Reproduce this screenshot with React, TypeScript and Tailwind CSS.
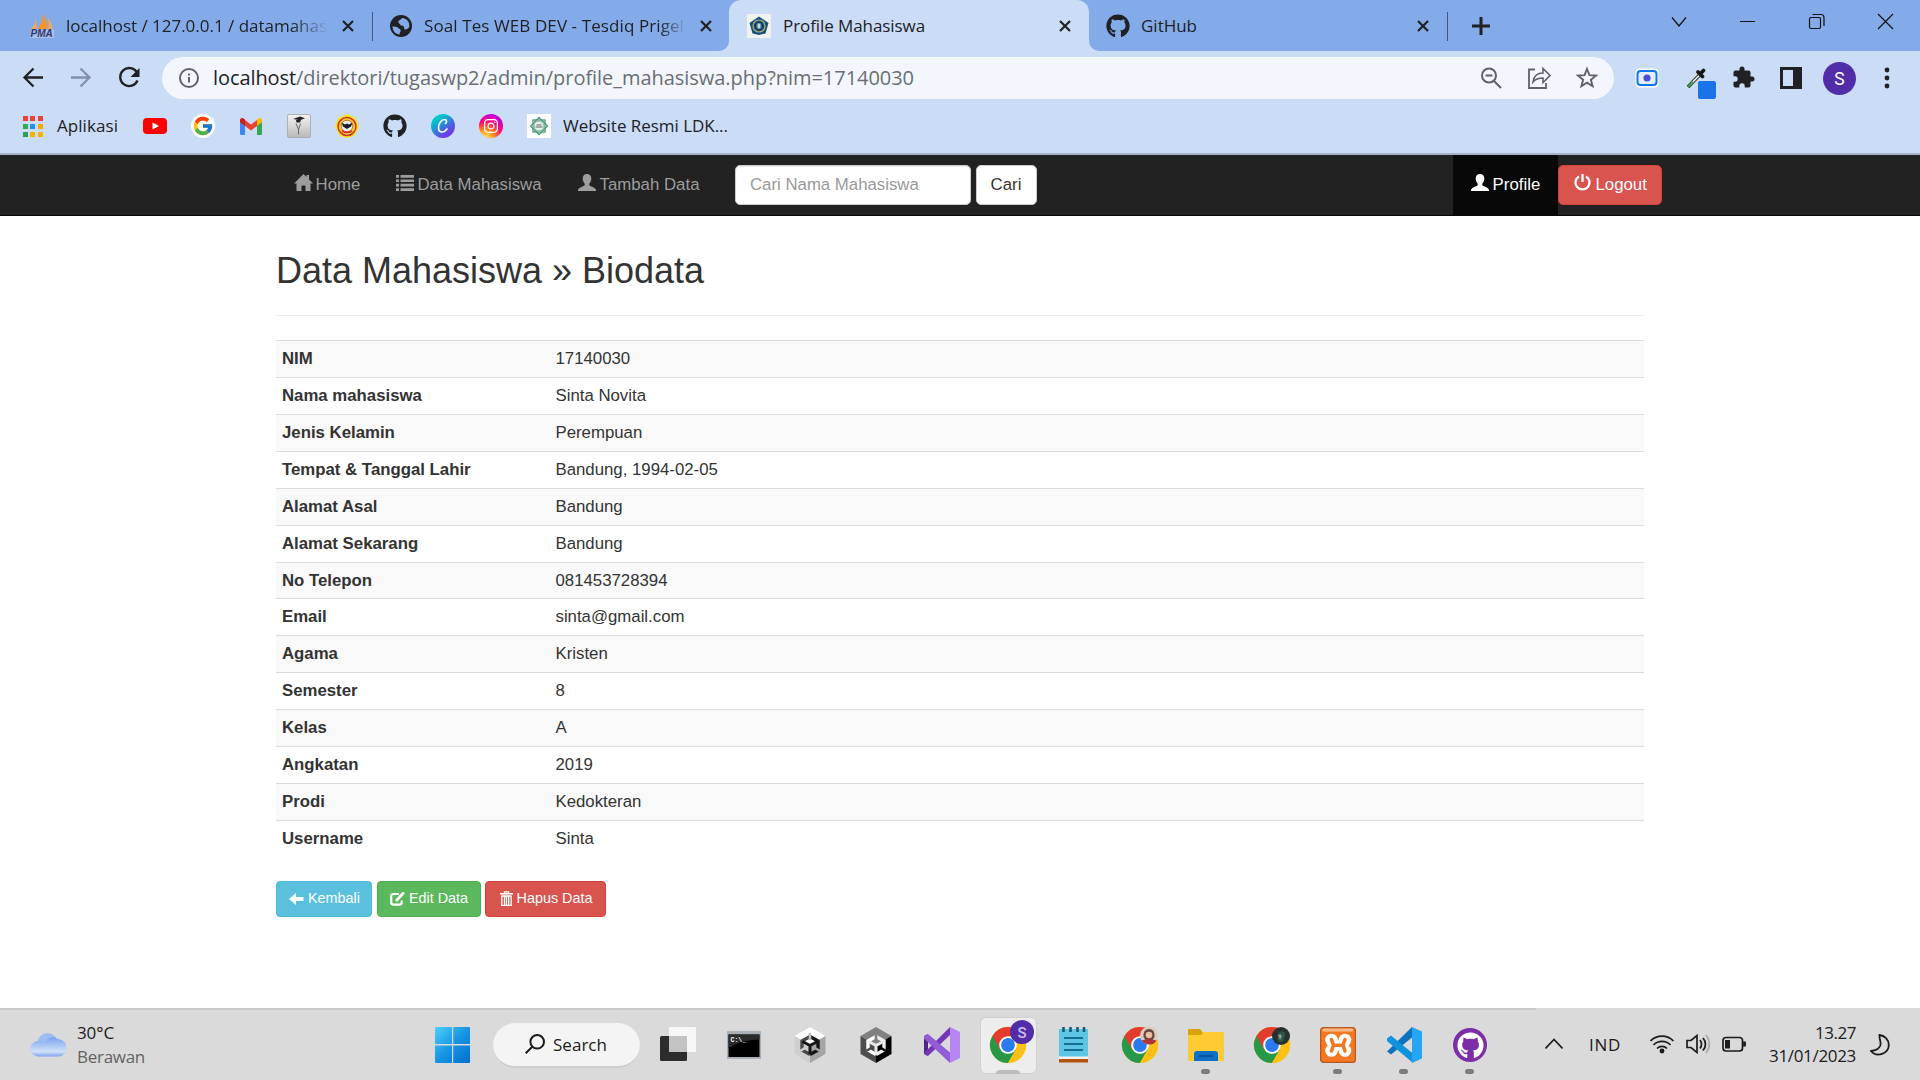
import React, { useLayoutEffect, useRef } from "react";
import { FaGithub, FaInstagram } from "react-icons/fa";
import { FcGoogle } from "react-icons/fc";

/* Text set to a given width by adjusting its letter spacing. */
function T({ w, className = "", children }: { w: number; className?: string; children: string }) {
  const ref = useRef<HTMLSpanElement>(null);
  useLayoutEffect(() => {
    const el = ref.current;
    if (!el) return;
    el.style.letterSpacing = "0px";
    const natural = el.getBoundingClientRect().width;
    el.style.letterSpacing = `${(w - natural) / children.length}px`;
  }, [w, children]);
  return (
    <span ref={ref} className={`inline-block shrink-0 whitespace-pre ${className}`}>
      {children}
    </span>
  );
}

const ui = "font-['Open_Sans','Noto_Sans',sans-serif]";

function Close() {
  return (
    <svg className="block h-3 w-3 shrink-0" viewBox="0 0 12 12" stroke="#202124" strokeWidth="2.2">
      <path d="M1 1l10 10M11 1L1 11" />
    </svg>
  );
}

function Globe() {
  return (
    <svg className="h-[22px] w-[22px] shrink-0" viewBox="0 0 22 22">
      <circle cx="11" cy="11" r="11" fill="#202124" />
      <path d="M2.500 11.500c2 .2 4.500-.1 5.500 1.200 1 1.300 3 1 2.600 3.300-.3 1.500-1.300 1.600-1 3.600C5.500 19 2.500 16 2.500 11.500zM12 3c-1 2-3.500 2-3.700 3.700-.1 1.800 1.900 1.700 2.100 3.100.3 1.500 2.200.4 3.300 1.600 1.200 1.300-.3 2.800 1.200 3 1.800.2 3.300-1 4.300-2.400C20 7 17 3.500 12 3z" fill="#84abe9" />
    </svg>
  );
}

function PmaIcon() {
  return (
    <svg className="h-6 w-6 shrink-0" viewBox="0 0 24 24">
      <path d="M6 4L6.500 15H1.500C4 12 5.500 8 6 4z" fill="#f9a94b" />
      <path d="M13 0c3 5 4.500 10 4.200 15H8c3-4 4.500-9 5-15z" fill="#f7931e" />
      <path d="M18 4c2.500 3 4 7 4.500 11H18.500c.5-4 .2-8-.5-11z" fill="#f9a94b" />
      <path d="M1 15.500h23v8.500H0z" fill="#c5cfea" opacity=".6" />
      <text x="0.500" y="23.300" fontSize="10" fontWeight="700" fontStyle="italic" fontFamily="Liberation Sans" fill="#34376b">PMA</text>
    </svg>
  );
}

function CrestIcon() {
  return (
    <svg className="h-6 w-6 shrink-0" viewBox="0 0 24 24">
      <rect width="24" height="24" fill="#f1f1ee" />
      <path d="M12 2.500l9.500 6.500-3 10.500-6.500 1.500-6.500-1.500L2.500 9z" fill="#14507e" />
      <circle cx="12" cy="12" r="6" fill="none" stroke="#b3b567" strokeWidth="1.200" />
      <circle cx="12" cy="12" r="3.800" fill="#27618a" stroke="#0e3555" />
      <path d="M10.500 9.500h3v5h-3z" fill="#cfd7cf" />
    </svg>
  );
}

function TabBar() {
  return (
    <div className={`flex h-[51px] bg-[#84abe9] text-[17px] text-[#202124] ${ui}`}>
      <div className="flex w-[372px] items-center pl-[30px]">
        <PmaIcon />
        <div className="ml-3 w-[262px] overflow-hidden [mask-image:linear-gradient(to_right,black_86%,transparent)]">
          <T w={261}>localhost / 127.0.0.1 / datamahas</T>
        </div>
        <div className="ml-3.5"><Close /></div>
      </div>
      <div className="mt-[12px] h-[29px] w-px bg-[#47597a]" />
      <div className="flex w-[356px] items-center bg-[#cbdcf6]">
        <div className="flex h-full w-full items-center rounded-br-[10px] bg-[#84abe9] pl-[17px]">
          <Globe />
          <div className="ml-3 w-[262px] overflow-hidden [mask-image:linear-gradient(to_right,black_90%,transparent)]">
            <T w={260}>Soal Tes WEB DEV - Tesdiq Prigel</T>
          </div>
          <div className="ml-[14px]"><Close /></div>
        </div>
      </div>
      <div className="flex w-[360px] bg-[#84abe9]">
        <div className="flex w-full items-center rounded-t-[12px] bg-[#cbdcf6] pl-[18px]">
          <CrestIcon />
          <T w={142} className="ml-3">Profile Mahasiswa</T>
          <div className="ml-[134px]"><Close /></div>
        </div>
      </div>
      <div className="flex w-[358px] bg-[#cbdcf6]">
        <div className="flex w-full items-center rounded-bl-[10px] bg-[#84abe9] pl-[17px]">
          <FaGithub className="h-6 w-6 shrink-0" />
          <T w={56} className="ml-[11px]">GitHub</T>
          <div className="ml-[220px]"><Close /></div>
        </div>
      </div>
      <div className="mt-[12px] h-[29px] w-px bg-[#47597a]" />
      <div className="flex w-[66px] items-center justify-center pr-px">
        <svg className="h-[18px] w-[18px]" viewBox="0 0 18 18" stroke="#202124" strokeWidth="3"><path d="M9 0v18M0 9h18" /></svg>
      </div>
      <div className="ml-[131px] flex h-[43px] items-center">
        <svg className="h-[43px] w-[275px]" viewBox="1645 0 275 43" fill="none" stroke="#111" strokeWidth="1.200">
          <path d="M1672 17.500l7 8.500 7-8.500M1740 21.500h15M1878 14l15 15M1893 14l-15 15" />
          <rect x="1809.500" y="17.500" width="11" height="11" rx="1.500" />
          <path d="M1812.500 14.500h8.500q3 0 3 3v8.500" />
        </svg>
      </div>
    </div>
  );
}

function Toolbar() {
  return (
    <div className={`flex h-[54px] items-center bg-[#cbdcf6] ${ui}`}>
      <svg className="h-[54px] w-[162px] shrink-0" viewBox="0 0 162 54" fill="none" strokeWidth="2.300">
        <path d="M43 26.500H25M33.500 17.500l-9 9 9 9" stroke="#202124" />
        <path d="M71 26.500h18M80.500 17.500l9 9-9 9" stroke="#8391aa" />
        <path d="M137 21.500a9 9 0 1 0 .5 8" stroke="#202124" />
        <path d="M139.500 17v9h-9z" fill="#202124" />
      </svg>
      <div className="flex h-[42px] w-[1452px] shrink-0 items-center rounded-full bg-[#f3f7fd] pl-[17px]">
        <svg className="h-5 w-5" viewBox="0 0 20 20" fill="none" stroke="#5f6368" strokeWidth="2">
          <circle cx="10" cy="10" r="9" /><path d="M10 9v5.500M10 5.500v2" />
        </svg>
        <div className="ml-[14px] w-[703px] text-[20px] leading-[30px]">
          <T w={83} className="text-[#202124]">localhost</T>
          <T w={618} className="text-[#6a6e73]">/direktori/tugaswp2/admin/profile_mahasiswa.php?nim=17140030</T>
        </div>
        <svg className="ml-[562px] h-6 w-[125px]" viewBox="1478 66 125 24" fill="none" stroke="#5f6368" strokeWidth="2">
          <circle cx="1489" cy="75.500" r="7" /><path d="M1494 81l7 7M1485.500 75.500h7" />
          <path d="M1535 69.500h-6v18.500h17v-5" strokeWidth="1.800" />
          <path d="M1533 82c.8-6 4-9 10-9v-4.500l7 7-7 7V78c-5 0-7.500 1-10 4z" strokeWidth="1.600" />
          <path d="M1587 69l2.400 6.200 6.600.4-5.100 4.200 1.700 6.400-5.600-3.600-5.600 3.600 1.700-6.400-5.100-4.200 6.600-.4z" strokeWidth="1.900" />
        </svg>
      </div>
      <svg className="h-[54px] w-[306px] shrink-0" viewBox="1614 51 306 54">
        <rect x="1635.500" y="68.500" width="23" height="19" rx="4" fill="#fff" />
        <rect x="1637.500" y="71" width="19" height="14" rx="3" fill="#e4eefc" stroke="#0b76f6" strokeWidth="2" />
        <circle cx="1647" cy="78" r="3.600" fill="#4a4fd8" />
        <path d="M1699 75.500l-11 11.500" stroke="#333" strokeWidth="3.600" fill="none" />
        <path d="M1699 75.500l-9 9.500" stroke="#e6f0e6" strokeWidth="1.700" />
        <path d="M1692.500 81.500l-4.500 5.500" stroke="#2f9c4a" strokeWidth="2" />
        <path d="M1698 72l4.500 4.500M1700.500 73.500l3-3" stroke="#151515" strokeWidth="3.800" strokeLinecap="round" />
        <rect x="1698" y="81" width="18" height="18" rx="2" fill="#1a73e8" />
        <path transform="translate(1731.500 65.500)" d="M20.500 11H19V7c0-1.100-.9-2-2-2h-4V3.500a2.500 2.500 0 0 0-5 0V5H4c-1.100 0-2 .9-2 2v3.800h1.500a2.700 2.700 0 0 1 0 5.400H2V20c0 1.100.9 2 2 2h3.800v-1.500a2.700 2.700 0 0 1 5.400 0V22H17c1.100 0 2-.9 2-2v-4h1.500a2.500 2.500 0 0 0 0-5z" fill="#202124" />
        <path d="M1780 67h22v22h-22zM1783 70v16h10V70z" fill="#202124" fillRule="evenodd" />
        <circle cx="1839.500" cy="78.500" r="16.500" fill="#512da8" />
        <text x="1839.500" y="85" fontSize="17.500" fill="#fff" textAnchor="middle" fontFamily="Roboto">S</text>
        <g fill="#202124"><circle cx="1887" cy="70" r="2.400" /><circle cx="1887" cy="78" r="2.400" /><circle cx="1887" cy="86" r="2.400" /></g>
      </svg>
    </div>
  );
}

function Slot({ children }: { children: React.ReactNode }) {
  return <div className="flex w-12 shrink-0 items-center justify-center">{children}</div>;
}

function Bookmarks() {
  const dots = ["#ea4335", "#ea4335", "#ea4335", "#34a853", "#1a90f0", "#f5a800", "#2f9c58", "#f5b400", "#f5b400"];
  return (
    <div className={`flex h-[50px] items-center border-b-2 border-[#a3b2cf] bg-[#cbdcf6] pb-[6px] text-[17px] text-[#202124] ${ui}`}>
      <div className="ml-[23px] grid w-5 grid-cols-3 gap-x-[2px] gap-y-[3px]">
        {dots.map((c, i) => (
          <span key={i} className="h-[5px] w-[5px]" style={{ backgroundColor: c }} />
        ))}
      </div>
      <T w={61} className="ml-[14px]">Aplikasi</T>
      <div className="ml-[13px] flex">
        <Slot>
          <svg className="h-4 w-6" viewBox="0 0 24 16"><rect width="24" height="16" rx="4" fill="#f00" /><path d="M9.500 4.500v7L16 8z" fill="#fff" /></svg>
        </Slot>
        <Slot>
          <span className="flex h-6 w-6 items-center justify-center rounded-full bg-white"><FcGoogle className="h-[22px] w-[22px]" /></span>
        </Slot>
        <Slot>
          <svg className="h-[17px] w-[22px]" viewBox="0 0 22 17">
            <path d="M0 3v12.500Q0 17 1.500 17H5V7z" fill="#4285f4" />
            <path d="M22 3v12.500q0 1.500-1.500 1.500H17V7z" fill="#34a853" />
            <path d="M5 2l6 4.500L17 2v6l-6 4.500L5 8z" fill="#ea4335" />
            <path d="M0 2.500C0 0 2.500-.5 4 .8L5 1.600V8L0 4.300z" fill="#c5221f" />
            <path d="M22 2.500C22 0 19.500-.5 18 .8L17 1.600V8l5-3.700z" fill="#fbbc04" />
          </svg>
        </Slot>
        <Slot>
          <svg className="h-6 w-6" viewBox="0 0 24 24">
            <defs><linearGradient id="plate" x1="0" y1="0" x2="0" y2="1"><stop offset="0" stopColor="#f4f4f4" /><stop offset="1" stopColor="#b9b9b9" /></linearGradient></defs>
            <rect x=".5" y=".5" width="23" height="23" rx="1.500" fill="url(#plate)" stroke="#a5a5a5" strokeWidth=".8" />
            <path d="M6 5l7-2.500 5 1.800-5 2zM9 6h5l-1 2.500H9.500z" fill="#222" />
            <path d="M9 9.500l2.500 6 2-6M11.500 15v5.500" stroke="#666" fill="none" />
          </svg>
        </Slot>
        <Slot>
          <svg className="h-6 w-6" viewBox="0 0 24 24">
            <path d="M12 0l9 4 3 9-5 9-7 2-7-2-5-9 3-9z" fill="#f8e51c" />
            <circle cx="12" cy="12.500" r="9" fill="#f5cf36" stroke="#d3312b" strokeWidth="1.500" />
            <circle cx="12" cy="12" r="5.800" fill="#e9edf0" stroke="#e76a32" />
            <path d="M6.500 8.500l3.500 2 2-1 2 1 3.500-2-1.500 4-4 2.500-4-2.500z" fill="#1d1d25" /><path d="M7 17q5 3 10 0" stroke="#d3312b" fill="none" strokeWidth="1.500" />
          </svg>
        </Slot>
        <Slot><FaGithub className="h-6 w-6" /></Slot>
        <Slot>
          <span className="flex h-6 w-6 items-center justify-center rounded-full bg-[linear-gradient(145deg,#00c4cc_25%,#4a63e0_60%,#7d2ae8_90%)]">
            <svg className="h-4 w-4" viewBox="0 0 16 16" fill="none" stroke="#fff" strokeWidth="1.600" strokeLinecap="round">
              <path d="M10.500 5.500c1.500-1 1.500-4-.8-4C6.500 1.500 3.500 5.500 3.500 9.500c0 5.500 5 6 8.500 1.500" />
            </svg>
          </span>
        </Slot>
        <Slot>
          <span className="flex h-6 w-6 items-center justify-center rounded-full bg-[radial-gradient(circle_at_28%_100%,#ffd84a_5%,#ff8a1f_30%,#ff0a6c_55%,#c800d8_80%,#7b1cff_100%)]">
            <FaInstagram className="h-4 w-4 text-white" />
          </span>
        </Slot>
        <Slot>
          <svg className="h-6 w-6" viewBox="0 0 24 24">
            <rect width="24" height="24" fill="#fff" />
            <g fill="none" stroke="#4e9b78" strokeWidth="1.300"><rect x="6" y="6" width="12" height="12" /><rect x="6" y="6" width="12" height="12" transform="rotate(45 12 12)" /></g>
            <circle cx="12" cy="12" r="5" fill="#e3efe8" stroke="#7fb79b" /><path d="M8.500 13h7M9.500 11h5" stroke="#666" strokeWidth="1" />
          </svg>
        </Slot>
      </div>
      <T w={165}>Website Resmi LDK...</T>
    </div>
  );
}

function UserGlyph() {
  return (
    <svg className="h-[17px] w-[18px] shrink-0" viewBox="0 0 18 17" fill="currentColor">
      <path d="M9 0c2.800 0 4.300 1.900 4.300 4.500 0 2.300-1 4.200-2 5.300v1.400c1.500 1.300 6.400 2.500 6.700 4.800v1H0v-1c.3-2.300 5.200-3.500 6.700-4.800V9.800c-1-1.100-2-3-2-5.300C4.700 1.900 6.200 0 9 0z" />
    </svg>
  );
}

function Nav() {
  return (
    <nav className="flex h-[61px] border-b border-[#080808] bg-[#222] text-[16.8px] text-[#9d9d9d]">
      <div className="flex h-[58px] items-center pl-[294px]">
        <svg className="mb-[3px] h-[17px] w-[19px]" viewBox="0 0 19 17" fill="currentColor"><path d="M9.500 0l3 3V1h2.500v4.500L19 9.500h-2.500V17h-5v-5.500h-4V17h-5V9.500H0z" /></svg>
        <T w={45} className="mt-[2px] ml-[2.500px]">Home</T>
        <svg className="mb-[2px] ml-[35px] h-4 w-[18px]" viewBox="0 0 18 16" fill="currentColor">
          <path d="M0 0h3v2.700H0zM4.500 0H18v2.700H4.500zM0 4.400h3v2.700H0zM4.500 4.400H18v2.700H4.500zM0 8.800h3v2.700H0zM4.500 8.800H18v2.700H4.500zM0 13.200h3v2.700H0zM4.500 13.200H18v2.700H4.500z" />
        </svg>
        <T w={124} className="mt-[2px] ml-[4px]">Data Mahasiswa</T>
        <div className="mb-[3px] ml-[36px]"><UserGlyph /></div>
        <T w={100} className="mt-[2px] ml-[4px]">Tambah Data</T>
        <input
          placeholder="Cari Nama Mahasiswa"
          className="mt-px ml-[35px] h-10 w-[236px] rounded-[5px] border border-[#ccc] bg-white px-[14.500px] text-[16.8px] shadow-[inset_0_1px_1px_rgba(0,0,0,.075)] placeholder:text-[#999] placeholder:opacity-100"
        />
        <button className="mt-px ml-[5px] h-10 w-[61px] rounded-[5px] border border-[#ccc] bg-white text-[#333]">Cari</button>
      </div>
      <div className="ml-[416px] flex h-[60px] w-[105px] items-center bg-[#080808] pb-0.5 pl-[18px] text-white">
        <div className="mb-[3px]"><UserGlyph /></div>
        <T w={48} className="mt-[2px] ml-[4px]">Profile</T>
      </div>
      <button className="mt-[10px] flex h-10 w-[104px] items-center rounded-[5px] border border-[#d43f3a] bg-[#d9534f] pb-[3px] pl-[15px] text-white">
        <svg className="mb-[2px] h-[17px] w-[17px]" viewBox="0 0 17 17" fill="none" stroke="currentColor" strokeWidth="2.300">
          <path d="M5 2.400a7 7 0 1 0 7 0" /><path d="M8.500 0v8" />
        </svg>
        <span className="mt-[2px] ml-[5px]">Logout</span>
      </button>
    </nav>
  );
}

const rows = [
  ["NIM", "17140030"],
  ["Nama mahasiswa", "Sinta Novita"],
  ["Jenis Kelamin", "Perempuan"],
  ["Tempat & Tanggal Lahir", "Bandung, 1994-02-05"],
  ["Alamat Asal", "Bandung"],
  ["Alamat Sekarang", "Bandung"],
  ["No Telepon", "081453728394"],
  ["Email", "sinta@gmail.com"],
  ["Agama", "Kristen"],
  ["Semester", "8"],
  ["Kelas", "A"],
  ["Angkatan", "2019"],
  ["Prodi", "Kedokteran"],
  ["Username", "Sinta"],
];

function Content() {
  return (
    <main className="h-[792px] bg-white px-[276px] text-[16.8px] text-[#333]">
      <h1 className="flex h-[99px] items-end pb-[24px] text-[36px] leading-[40px]">
        <T w={428}>Data Mahasiswa » Biodata</T>
      </h1>
      <div className="mb-6 h-px bg-[#eee]" />
      <div>
        {rows.map(([k, v]) => (
          <div
            key={k}
            className={`flex items-start border-t border-[#ddd] pt-[6px] leading-[24px] odd:bg-[#f9f9f9] ${k === "No Telepon" ? "h-[36px]" : "h-[37px]"}`}
          >
            <span className="w-[279.5px] pl-[6px] font-bold">{k}</span>
            <span>{v}</span>
          </div>
        ))}
      </div>
      <div className="mt-[24px] flex text-[14.4px] text-white">
        <button className="flex h-9 w-[96px] items-center rounded-[4px] border border-[#46b8da] bg-[#5bc0de] pl-[12px]">
          <svg className="h-3 w-[15px]" viewBox="0 0 15 12" fill="currentColor"><path d="M7 0v4h7.500v4H7v4L0 6z" /></svg>
          <T w={52} className="ml-1">Kembali</T>
        </button>
        <button className="ml-[5px] flex h-9 w-[104px] items-center rounded-[4px] border border-[#4cae4c] bg-[#5cb85c] pl-[12px]">
          <svg className="mb-px h-[14px] w-[15px]" viewBox="0 0 15 14" fill="none" stroke="currentColor">
            <path d="M9 2H3.500Q1.200 2 1.200 4.200v6.300q0 2.200 2.300 2.200h6q2.200 0 2.200-2.200V8.500" strokeWidth="2.200" />
            <path d="M6 9l6.500-7" strokeWidth="2.800" /><path d="M12.500 2l1.500-1.500" strokeWidth="3" />
          </svg>
          <T w={59} className="ml-1">Edit Data</T>
        </button>
        <button className="ml-[4px] flex h-9 w-[121px] items-center rounded-[4px] border border-[#d43f3a] bg-[#d9534f] pl-[13.500px]">
          <svg className="mb-[2px] h-[15px] w-[13px]" viewBox="0 0 13 15" fill="none" stroke="currentColor">
            <path d="M0 2.800h13" strokeWidth="1.600" /><path d="M4.500 2.500V.8h4v1.700M1.800 5v9.300h9.400V5M4.500 5v9M6.500 5v9M8.700 5v9M1.500 5h10" strokeWidth="1.300" />
          </svg>
          <T w={76} className="ml-1">Hapus Data</T>
        </button>
      </div>
    </main>
  );
}

function Chrome({ badge }: { badge: "s" | "red" | "dark" }) {
  return (
    <svg className="h-[52px] w-[52px]" viewBox="-8 -8 52 52">
      <circle cx="18" cy="18" r="18" fill="#fbc116" />
      <path d="M18 18L2.400 9A18 18 0 0 0 18 36l7.800-13.500z" fill="#279847" />
      <path d="M2.400 9A18 18 0 0 1 33.600 9H18l-7.800 13.500z" fill="#e33b2e" />
      <path d="M18 9h15.600A18 18 0 0 1 18 36l7.800-13.500z" fill="#fbc116" />
      <circle cx="18" cy="18" r="8.800" fill="#fff" /><circle cx="18" cy="18" r="6.900" fill="#2a7bf0" />
      {badge === "s" && (
        <g><circle cx="32" cy="5" r="12" fill="#512da8" /><text x="32" y="10.500" fontSize="15" fontWeight="500" textAnchor="middle" fill="#cdbcf0" fontFamily="Roboto">S</text></g>
      )}
      {badge === "red" && (
        <g><circle cx="27" cy="8.500" r="9" fill="#d9cfc0" /><path d="M21.500 10q-.5-8 5.500-8t5.500 8l-2 3h-7z" fill="#6b4640" /><circle cx="27" cy="8" r="3.300" fill="#e8bfa2" /><path d="M19.500 13.500q7.500-3 15 0-2.500 4.500-7.500 4t-7.500-4z" fill="#b0353a" /></g>
      )}
      {badge === "dark" && (
        <g><circle cx="27" cy="9" r="9" fill="#27302f" /><path d="M24 15q-2-10 4-11 4 1 3 5l-2 6z" fill="#2c5548" /><path d="M24 8q3-2 4 1l-2 4z" fill="#8b9a8b" /></g>
      )}
    </svg>
  );
}

/* Isometric cube with an arrowed inner cube. */
function Cube({ dark }: { dark?: boolean }) {
  const [top, left, right, ink, ink2] = dark
    ? ["#808080", "#4d4d4d", "#000", "#fff", "#ececec"]
    : ["#fff", "#cfcfcf", "#a5a5a5", "#4a4a4a", "#151515"];
  return (
    <svg className="h-9 w-8" viewBox="0 0 32 36">
      <path d="M16 0l15.500 9L16 18 .5 9z" fill={top} /><path d="M.5 9L16 18v18L.5 27z" fill={left} /><path d="M31.500 9L16 18v18l15.500-9z" fill={right} />
      <path d="M16 9.500L8 14v9l8 4.500" fill="none" stroke={ink} strokeWidth="3.400" />
      <path d="M16 9.500l8 4.500v9l-8 4.500" fill="none" stroke={ink2} strokeWidth="3.400" />
      <path d="M16 18.500l-7.500-4M16 18.500l7.500-4M16 18v9" stroke={ink2} strokeWidth="3" />
      <path d="M16 6v7" stroke={dark ? "#808080" : "#bdbdbd"} strokeWidth="2.600" />
      <path d="M6 24l6-3.500" stroke={left} strokeWidth="2.600" /><path d="M26 24l-6-3.500" stroke={right} strokeWidth="2.600" />
    </svg>
  );
}

function App66({ children, active, running }: { children: React.ReactNode; active?: boolean; running?: boolean }) {
  return (
    <div className="relative flex h-[57px] w-[66px] shrink-0 items-center justify-center">
      <div className={`flex h-[57px] w-[57px] items-center justify-center rounded-[6px] ${active ? "border border-[#d0d0d0] bg-[#ededed]" : ""}`}>{children}</div>
      {active && <span className="absolute bottom-0 left-[21px] h-1 w-6 rounded-t bg-[#bdbdbd]" />}
      {running && <span className="absolute bottom-0 left-[28px] h-[5px] w-[9px] rounded-full bg-[#7c7c7c]" />}
    </div>
  );
}

function Taskbar() {
  return (
    <footer className={`bg-[#dadada] text-[17px] text-[#1b1b1b] ${ui}`}>
      <div className="h-[2px] w-[1536px] bg-[#c9c9c9]" />
      <div className="flex h-[70px] items-center">
        <svg className="ml-[30px] h-[24px] w-9" viewBox="0 0 36 24">
          <defs>
            <linearGradient id="cloud" x1="0" y1="0" x2="0" y2="1"><stop offset="0" stopColor="#7da3ee" /><stop offset=".75" stopColor="#cfe0f8" /><stop offset="1" stopColor="#7fa3ee" /></linearGradient>
          </defs>
          <circle cx="17.500" cy="10" r="10" fill="#9cbcf2" />
          <path d="M7 8a8 8 0 0 1 8 3 8 8 0 0 1 13-5 8.500 8.500 0 0 1 0 17.500H8A7.800 7.800 0 0 1 7 8z" fill="url(#cloud)" />
        </svg>
        <div className="ml-[11px] flex w-[120px] flex-col items-start leading-[24px]">
          <T w={37}>30°C</T>
          <T w={68} className="text-[#636363]">Berawan</T>
        </div>
        <svg className="ml-[238px] h-9 w-9" viewBox="0 0 36 36">
          <defs><linearGradient id="win" x1="0" y1="0" x2="1" y2="1"><stop offset="0" stopColor="#4cd0fc" /><stop offset=".5" stopColor="#1795e2" /><stop offset="1" stopColor="#0071cf" /></linearGradient></defs>
          <path d="M0 1q0-1 1-1h16v17H0zM18.200 0H34q1 0 1 1v16H18.200zM0 18.500h17V36H1q-1 0-1-1zM18.200 18.500H35V35q0 1-1 1H18.200z" fill="url(#win)" />
        </svg>
        <div className="ml-[22px] flex h-[45px] w-[147px] items-center rounded-full border-b-2 border-[#cdcdcd] bg-[#f4f4f4] pl-[32px]">
          <svg className="h-5 w-5" viewBox="0 0 20 20" fill="none" stroke="#1b1b1b" strokeWidth="2"><circle cx="12.200" cy="7.800" r="6.800" /><path d="M7.300 12.700L.7 19.300" /></svg>
          <T w={54} className="mt-[2px] ml-2">Search</T>
        </div>
        <div className="ml-[5px] flex">
          <App66>
            <svg className="h-9 w-9" viewBox="0 0 36 36"><rect y="9" width="27" height="25" rx="1.500" fill="#2c2c2c" /><rect x="9" width="27" height="25" rx="1" fill="#f7f7f7" /><path d="M9 9h18v16H9z" fill="#c3c3c3" /></svg>
          </App66>
          <App66>
            <svg className="h-7 w-[34px]" viewBox="0 0 34 28"><rect width="34" height="28" fill="#a9b0b8" /><rect x="1.500" y="3.500" width="31" height="22.500" fill="#000" /><path d="M1.500 3.500h31v5Q12 9 1.500 17z" fill="#2b2b2b" /><text x="3.500" y="10.500" fontSize="6.500" fontWeight="700" fill="#fff" fontFamily="Liberation Mono">C:\_</text></svg>
          </App66>
          <App66><Cube /></App66>
          <App66><Cube dark /></App66>
          <App66>
            <svg className="h-9 w-9" viewBox="0 0 36 36">
              <path d="M0 9l4-2v22l-4-2z" fill="#52218a" />
              <path d="M4 29L26 8V0L0 26z" fill="#7636b8" />
              <path d="M0 9l4-2 22 18.500V36L0 11.500z" fill="#945bd8" />
              <path d="M26 0l10 5v26l-10 5z" fill="#b885f5" />
            </svg>
          </App66>
          <App66 active><Chrome badge="s" /></App66>
          <App66>
            <svg className="h-9 w-[30px]" viewBox="0 0 30 36"><rect y="31" width="29" height="4.500" fill="#b4530f" /><rect y="29" width="29" height="3" fill="#f2f2f2" /><rect y="2" width="29" height="27.500" rx="1" fill="#5cc6e4" /><path d="M5 11h19M5 17h19M5 23h19" stroke="#136f95" strokeWidth="1.800" /><path d="M4.500 0v5M11.500 0v5M18.500 0v5M25 0v5" stroke="#145b78" strokeWidth="2.600" /></svg>
          </App66>
          <App66><Chrome badge="red" /></App66>
          <App66 running>
            <svg className="h-9 w-9" viewBox="0 0 36 36"><path d="M0 3q0-1 1-1h11l3 3.500V12H0z" fill="#dca20b" /><path d="M0 8h13l3-3h20v28q0 1-1 1H0z" fill="#fecb35" /><path d="M6 34V27q0-3 3-3h18q3 0 3 3v7z" fill="#0e6fc4" /><path d="M11 29h14" stroke="#0b4d94" strokeWidth="1.700" /></svg>
          </App66>
          <App66><Chrome badge="dark" /></App66>
          <App66 running>
            <svg className="h-9 w-9" viewBox="0 0 36 36">
              <rect x=".6" y=".6" width="34.800" height="34.800" rx="3" fill="#f37823" stroke="#b4581c" strokeWidth="1.200" /><rect x="2.500" y="1.500" width="31" height="3" rx="1.500" fill="#f9b98b" />
              <g fill="#fff"><circle cx="11.500" cy="13" r="6.300" /><circle cx="25" cy="13" r="6.300" /><circle cx="11.500" cy="23.500" r="6.300" /><circle cx="25" cy="23.500" r="6.300" /><path d="M9 13h18.500v10.500H9z" /></g>
              <path d="M11.500 12.500l2 5.700-2 5.800M25 12.500l-2 5.700 2 5.800M13.500 18.200H23" stroke="#f37823" strokeWidth="3.600" strokeLinecap="round" strokeLinejoin="round" fill="none" />
            </svg>
          </App66>
          <App66 running>
            <svg className="h-9 w-9" viewBox="0 0 36 36"><path d="M1 24.500L26 0v10.500L5 27.500z" fill="#0d72bf" /><path d="M1 11.500l4-3 22 18V36L1 14z" fill="#1292dd" /><path d="M26 0l10 4.500v27L26 36z" fill="#28a5f2" /></svg>
          </App66>
          <App66 running>
            <span className="flex h-[34px] w-[34px] items-center justify-center rounded-full bg-[#7d2ea6]"><FaGithub className="h-[27px] w-[27px] text-white" /></span>
          </App66>
        </div>
        <svg className="ml-[42px] mb-[2px] h-3 w-[18px]" viewBox="0 0 18 12" fill="none" stroke="#1b1b1b" strokeWidth="1.700"><path d="M.5 10.500l8.500-9 8.500 9" /></svg>
        <T w={32} className="ml-[26px]">IND</T>
        <svg className="mb-[2px] ml-[29px] h-6 w-[98px]" viewBox="1650 1032 98 24" fill="none" stroke="#1b1b1b" strokeWidth="1.700">
          <path d="M1650.500 1041a16 16 0 0 1 23 0M1653.500 1045a12 12 0 0 1 17 0M1657 1048.500a7 7 0 0 1 10 0" /><circle cx="1662" cy="1051" r="1.600" fill="#1b1b1b" />
          <path d="M1687 1040.500h4l6-5v17l-6-5h-4zM1700 1040q3 4 0 8.500M1703 1038q5 6 0 12.500" /><path d="M1706 1035q7 9 0 18" stroke="#a9a9a9" />
          <rect x="1723" y="1037.500" width="19.500" height="13.500" rx="3" /><rect x="1725" y="1040" width="5" height="8.500" fill="#1b1b1b" stroke="none" /><path d="M1744.500 1041.500v5" strokeWidth="2.800" />
        </svg>
        <div className="mb-[2px] flex w-[108px] flex-col items-end leading-[23px]">
          <T w={41}>13.27</T>
          <T w={87}>31/01/2023</T>
        </div>
        <svg className="ml-[14px] h-[22px] w-5" viewBox="0 0 20 22" fill="none" stroke="#1b1b1b" strokeWidth="1.800"><path d="M9.500 1c5 .5 9.300 4.500 9.300 10 0 8.500-12 13-17.800 6 5-.5 8-2 9.300-5.500C11.500 8 9 5 9.500 1z" /></svg>
      </div>
    </footer>
  );
}

export default function App() {
  return (
    <div className="h-[1080px] w-[1920px] overflow-hidden bg-white font-['Liberation_Sans',Arial,sans-serif]">
      <TabBar />
      <Toolbar />
      <Bookmarks />
      <Nav />
      <Content />
      <Taskbar />
    </div>
  );
}
